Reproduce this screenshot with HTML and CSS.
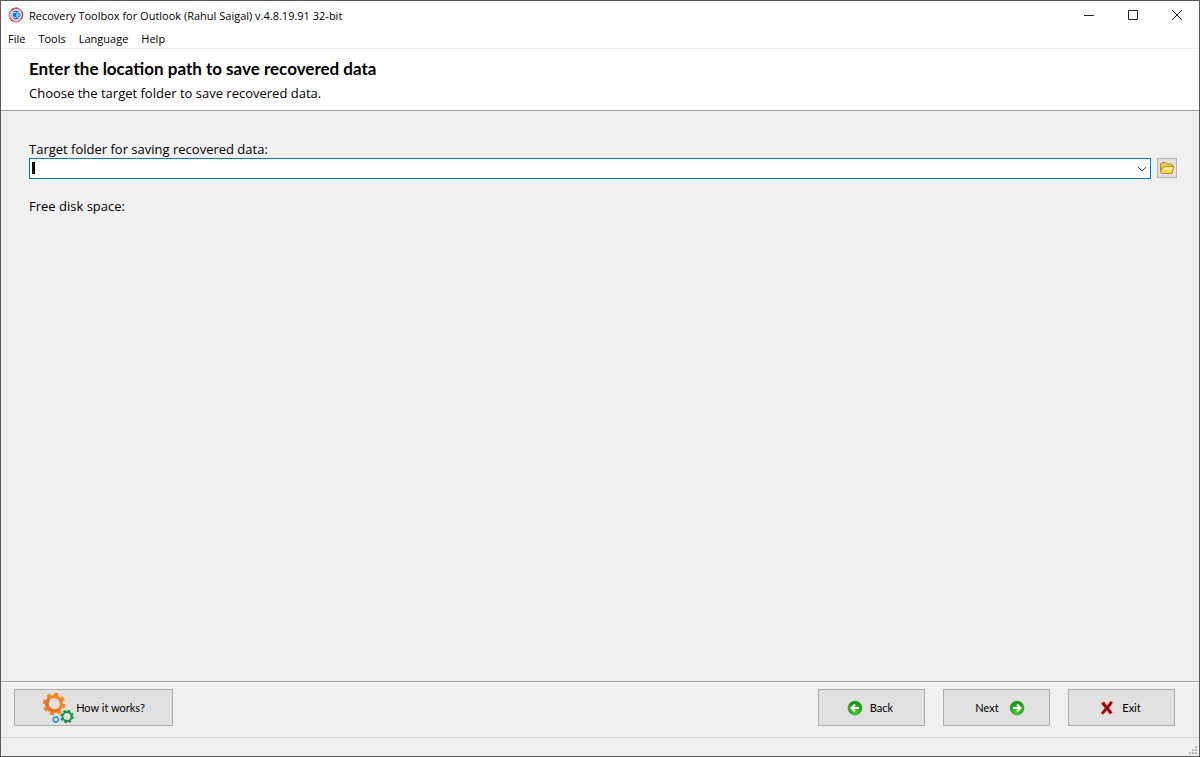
FILE: index.html
```html
<!DOCTYPE html>
<html lang="en">
  <head>
    <meta charset="UTF-8" />
    <meta name="viewport" content="width=device-width, initial-scale=1.0" />
    <title>Recovery Toolbox for Outlook</title>
    <link rel="stylesheet" href="styles.css" />
  </head>
  <body>
    <div class="window">
      <div class="titlebar">
        <svg class="app-icon" viewBox="0 0 16 16">
          <circle cx="8" cy="8" r="6.6" fill="#fff" stroke="#d98080" stroke-width="1.8" />
          <path d="M3 3.5A7 7 0 0 1 10 1.4M14 5a7 7 0 0 1-1 7M2 11.5a7 7 0 0 0 3 2.8" fill="none" stroke="#bd4b4f" stroke-width="1.2" />
          <circle cx="8" cy="8" r="4.6" fill="#1979bd" />
          <path d="M8 5.5H6.2C4.8 5.5 4.3 6.7 4.3 8s.5 2.5 1.9 2.5H8" fill="none" stroke="#a9d8f4" stroke-width="1.2" />
          <path d="M12 5.8H9v4.500h3M9 8h3" fill="none" stroke="#c5e5f7" />
        </svg>
        <span class="title">Recovery Toolbox for Outlook (Rahul Saigal) v.4.8.19.91 32-bit</span>
        <div class="window-controls">
          <button type="button" aria-label="Minimize">
            <svg viewBox="0 0 12 12"><path d="M1 6.5h10" /></svg>
          </button>
          <button type="button" aria-label="Maximize">
            <svg viewBox="0 0 12 12"><path d="M1.5 1.5h9v9h-9z" /></svg>
          </button>
          <button type="button" aria-label="Close">
            <svg viewBox="0 0 12 12"><path d="M1 1l10 10M11 1L1 11" /></svg>
          </button>
        </div>
      </div>

      <nav class="menubar">
        <button type="button">File</button>
        <button type="button">Tools</button>
        <button type="button">Language</button>
        <button type="button">Help</button>
      </nav>

      <header class="page-header">
        <h1>Enter the location path to save recovered data</h1>
        <p>Choose the target folder to save recovered data.</p>
      </header>

      <main class="content">
        <label for="target">Target folder for saving recovered data:</label>
        <div class="target-row">
          <div class="combo">
            <span class="caret"></span>
            <input id="target" type="text" />
            <button type="button" class="combo-arrow" aria-label="Show recent folders">
              <svg viewBox="0 0 10 6"><path d="M1 1l4 4 4-4" /></svg>
            </button>
          </div>
          <button type="button" class="browse" aria-label="Browse">
            <svg viewBox="0 0 16 14">
              <path d="M1.5 11V3L3 1.5h3.5L8 3h4.5l1 1v7z" fill="#edc84c" stroke="#b88d1c" />
              <path d="M2.5 12.5H13l2-7H6L4.5 7H3l-1.500 4.500z" fill="#f3d35b" stroke="#b88d1c" stroke-linejoin="round" />
              <path d="M6.3 6.3h7.500L13 9H3.200l.5-1.300h1.200z" fill="#fff0a4" />
            </svg>
          </button>
        </div>
        <p class="disk-space">Free disk space:</p>
      </main>

      <footer class="actions">
        <button type="button" class="action how">
          <svg class="gears" viewBox="0 0 32 32">
            <g fill="none">
              <circle cx="12" cy="12" r="9.8" stroke="#fa8212" stroke-width="3" stroke-dasharray="4 3.697" />
              <circle cx="12" cy="12" r="7.4" stroke="#fa8212" stroke-width="3" />
              <path d="M17.2 17.2A7.4 7.4 0 0 1 6.8 6.8" stroke="#ec6c22" stroke-width="3" />
              <circle cx="25" cy="24.5" r="5.7" stroke="#129447" stroke-width="2" stroke-dasharray="2.5 1.977" />
              <circle cx="25" cy="24.5" r="4.5" stroke="#129447" stroke-width="1.8" />
              <circle cx="13.8" cy="27.5" r="3.1" stroke="#2a91bf" stroke-width="1" stroke-dasharray="1.4 1.035" />
              <circle cx="13.8" cy="27.5" r="2.3" stroke="#2a91bf" stroke-width="1.3" />
            </g>
          </svg>
          <span>How it works?</span>
        </button>
        <div class="wizard-buttons">
          <button type="button" class="action back">
            <svg viewBox="0 0 16 16">
              <defs>
                <radialGradient id="green" cx="50%" cy="75%" r="70%">
                  <stop offset="0" stop-color="#43d51b" />
                  <stop offset="1" stop-color="#159213" />
                </radialGradient>
              </defs>
              <circle cx="8" cy="8" r="7" fill="url(#green)" stroke="#32a52b" stroke-width=".6" />
              <path d="M12 8H4.5M8 4.5L4.5 8 8 11.5" fill="none" stroke="#fff" stroke-width="2" />
            </svg>
            <span>Back</span>
          </button>
          <button type="button" class="action next">
            <span>Next</span>
            <svg viewBox="0 0 16 16">
              <circle cx="8" cy="8" r="7" fill="url(#green)" stroke="#32a52b" stroke-width=".6" />
              <path d="M4 8h7.5M8 4.5L11.5 8 8 11.5" fill="none" stroke="#fff" stroke-width="2" />
            </svg>
          </button>
          <button type="button" class="action exit">
            <svg viewBox="0 0 16 16">
              <path d="M2 3.5l3-2 3 4L11.5 1 14 2.5 10.200 8l3.300 4.500-2.500 2-3.200-4L4 14.800 1.800 13l4-5z" fill="#b31010" />
              <path d="M4 4l8 9M12.5 2.5L3.5 13" fill="none" stroke="#7c0000" />
            </svg>
            <span>Exit</span>
          </button>
        </div>
      </footer>

      <div class="statusbar">
        <svg class="grip" viewBox="0 0 8 8">
          <path d="M6 0h2v2H6zM3 3h2v2H3zM6 3h2v2H6zM0 6h2v2H0zM3 6h2v2H3zM6 6h2v2H6z" fill="#b8b8b8" />
        </svg>
      </div>
    </div>
  </body>
</html>
```
FILE: styles.css
```css
* {
  box-sizing: border-box;
}

body {
  margin: 0;
  font-family: "Open Sans", "Noto Sans", sans-serif;
  font-size: 11px;
  color: #000;
}

button {
  margin: 0;
  padding: 0;
  border: none;
  background: none;
  font: inherit;
  color: inherit;
}

svg {
  display: block;
  flex-shrink: 0;
}

.window {
  display: flex;
  flex-direction: column;
  min-height: 100vh;
  border: 1px solid #5a5a5a;
  background: #f0f0f0;
}

.titlebar {
  display: flex;
  align-items: center;
  height: 28px;
  padding-left: 7px;
  background: #fff;
}

.app-icon {
  width: 16px;
  height: 16px;
  margin-right: 5px;
}

.window-controls {
  display: flex;
  margin-left: auto;
}

.window-controls button {
  display: flex;
  align-items: center;
  justify-content: center;
  width: 44px;
  height: 28px;
}

.window-controls svg {
  width: 12px;
  height: 12px;
  fill: none;
  stroke: #222;
}

.menubar {
  display: flex;
  gap: 13px;
  height: 20px;
  padding-left: 7px;
  background: #fff;
  border-bottom: 1px solid #ededed;
}

.page-header {
  height: 62px;
  padding: 9px 28px 0;
  background: #fff;
  border-bottom: 1px solid #a0a0a0;
}

.page-header h1,
.page-header p {
  margin: 0;
}

.page-header h1 {
  font-family: Lato, sans-serif;
  font-size: 17px;
  line-height: 22px;
}

.page-header p,
.content {
  font-size: 13px;
}

.page-header p {
  margin-top: 4px;
  line-height: 18px;
}

.content {
  flex: 1;
  padding: 29px 22px 0 28px;
}

.content label {
  display: block;
  line-height: 18px;
}

.target-row {
  display: flex;
  gap: 6px;
}

.combo {
  position: relative;
  display: flex;
  flex: 1;
  height: 21px;
  background: #fff;
  border: 1px solid #0078d7;
}

.combo input {
  flex: 1;
  padding: 0 4px;
  border: none;
  outline: none;
  background: none;
  font: inherit;
}

.caret {
  position: absolute;
  left: 2px;
  top: 3px;
  width: 3px;
  height: 12px;
  background: #000;
}

.combo-arrow {
  display: flex;
  align-items: center;
  justify-content: center;
  width: 17px;
}

.combo-arrow svg {
  width: 10px;
  height: 6px;
  fill: none;
  stroke: #444;
}

.browse {
  display: flex;
  align-items: center;
  justify-content: center;
  width: 20px;
  height: 20px;
  background: #e1e1e1;
  border: 1px solid #b5b5b5;
}

.browse svg {
  width: 16px;
  height: 14px;
}

.disk-space {
  margin: 18px 0 0;
  line-height: 18px;
}

.actions {
  display: flex;
  justify-content: space-between;
  padding: 7px 24px 11px 13px;
  border-top: 1px solid #a0a0a0;
  box-shadow: inset 0 1px #fff;
}

.wizard-buttons {
  display: flex;
  gap: 18px;
}

.action {
  display: flex;
  align-items: center;
  justify-content: center;
  width: 107px;
  height: 37px;
  background: #e1e1e1;
  border: 1px solid #adadad;
  font-family: Lato, sans-serif;
}

.action svg {
  width: 16px;
  height: 16px;
}

.how {
  gap: 2px;
  width: 159px;
}

.action .gears {
  width: 32px;
  height: 32px;
}

.back,
.exit {
  gap: 7px;
  padding-right: 3px;
}

.next {
  gap: 10px;
  padding-left: 7px;
}

.statusbar {
  display: flex;
  align-items: flex-end;
  justify-content: flex-end;
  height: 19px;
  padding: 2px;
  border-top: 1px solid #d7d7d7;
}

.grip {
  width: 8px;
  height: 8px;
}
```
